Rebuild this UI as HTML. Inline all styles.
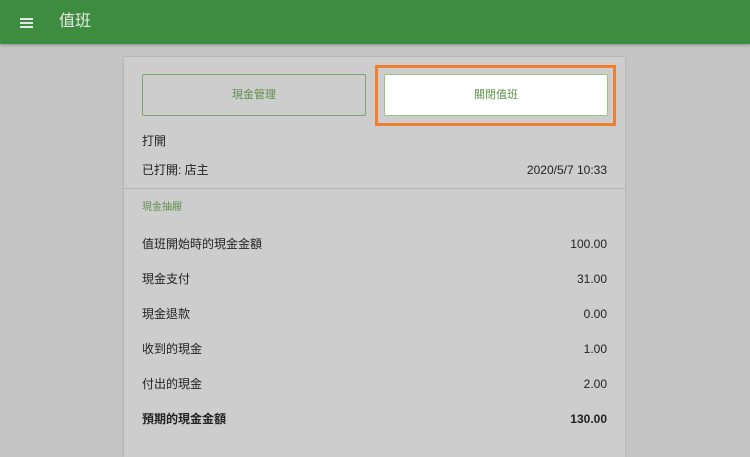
<!DOCTYPE html><html><head><meta charset="utf-8"><style>
body{margin:0;width:750px;height:437px;overflow:hidden;background:#c4c4c4;font-family:"Liberation Sans","Noto Sans CJK TC",sans-serif;position:relative}
.hdr{position:absolute;left:0;top:0;width:750px;height:44px;background:#3d8c40;box-shadow:0 1px 3px rgba(0,0,0,.3)}
.hdr .m{position:absolute;left:20px;top:18px;width:13px;height:2px;background:#e6e6e6;box-shadow:0 4px 0 #e6e6e6,0 8px 0 #e6e6e6}
.hdr .t{position:absolute;left:59px;top:12px;font-size:16px;line-height:20px;color:#e8e8e8}
.card{position:absolute;left:124px;top:57px;width:501px;height:400px;background:#cdcdcd;box-shadow:0 0 2px rgba(0,0,0,.2)}
.b{position:absolute;top:17px;height:42px;border:1px solid #7fa66a;border-radius:2px;box-sizing:border-box;text-align:center;line-height:40px;font-size:11px;color:#5e8f4a}
.or{position:absolute;left:251px;top:8px;width:241px;height:61px;border:3px solid #f08030;box-sizing:border-box}
.r{position:absolute;left:18px;right:18px;font-size:12px;line-height:16px;color:#222;display:flex;justify-content:space-between;align-items:center}
.div{position:absolute;left:0;right:0;top:131px;height:1px;background:#b5b5b5}
</style></head><body>
<div class="hdr"><div class="m"></div><div class="t">值班</div></div>
<div class="card">
<div class="b" style="left:18px;width:224px">現金管理</div>
<div class="or"></div>
<div class="b" style="left:260px;width:224px;background:#fff;border-color:#9cc28a">關閉值班</div>
<div class="r" style="top:76px">打開</div>
<div class="r" style="top:105px"><span>已打開: 店主</span><span>2020/5/7 10:33</span></div>
<div class="div"></div>
<div class="r" style="top:143px;font-size:10px;color:#5e8f4a">現金抽屜</div>
<div class="r" style="top:179px"><span>值班開始時的現金金額</span><span>100.00</span></div>
<div class="r" style="top:214px"><span>現金支付</span><span>31.00</span></div>
<div class="r" style="top:249px"><span>現金退款</span><span>0.00</span></div>
<div class="r" style="top:284px"><span>收到的現金</span><span>1.00</span></div>
<div class="r" style="top:319px"><span>付出的現金</span><span>2.00</span></div>
<div class="r" style="top:354px;font-weight:bold"><span>預期的現金金額</span><span>130.00</span></div>
</div>
</body></html>
